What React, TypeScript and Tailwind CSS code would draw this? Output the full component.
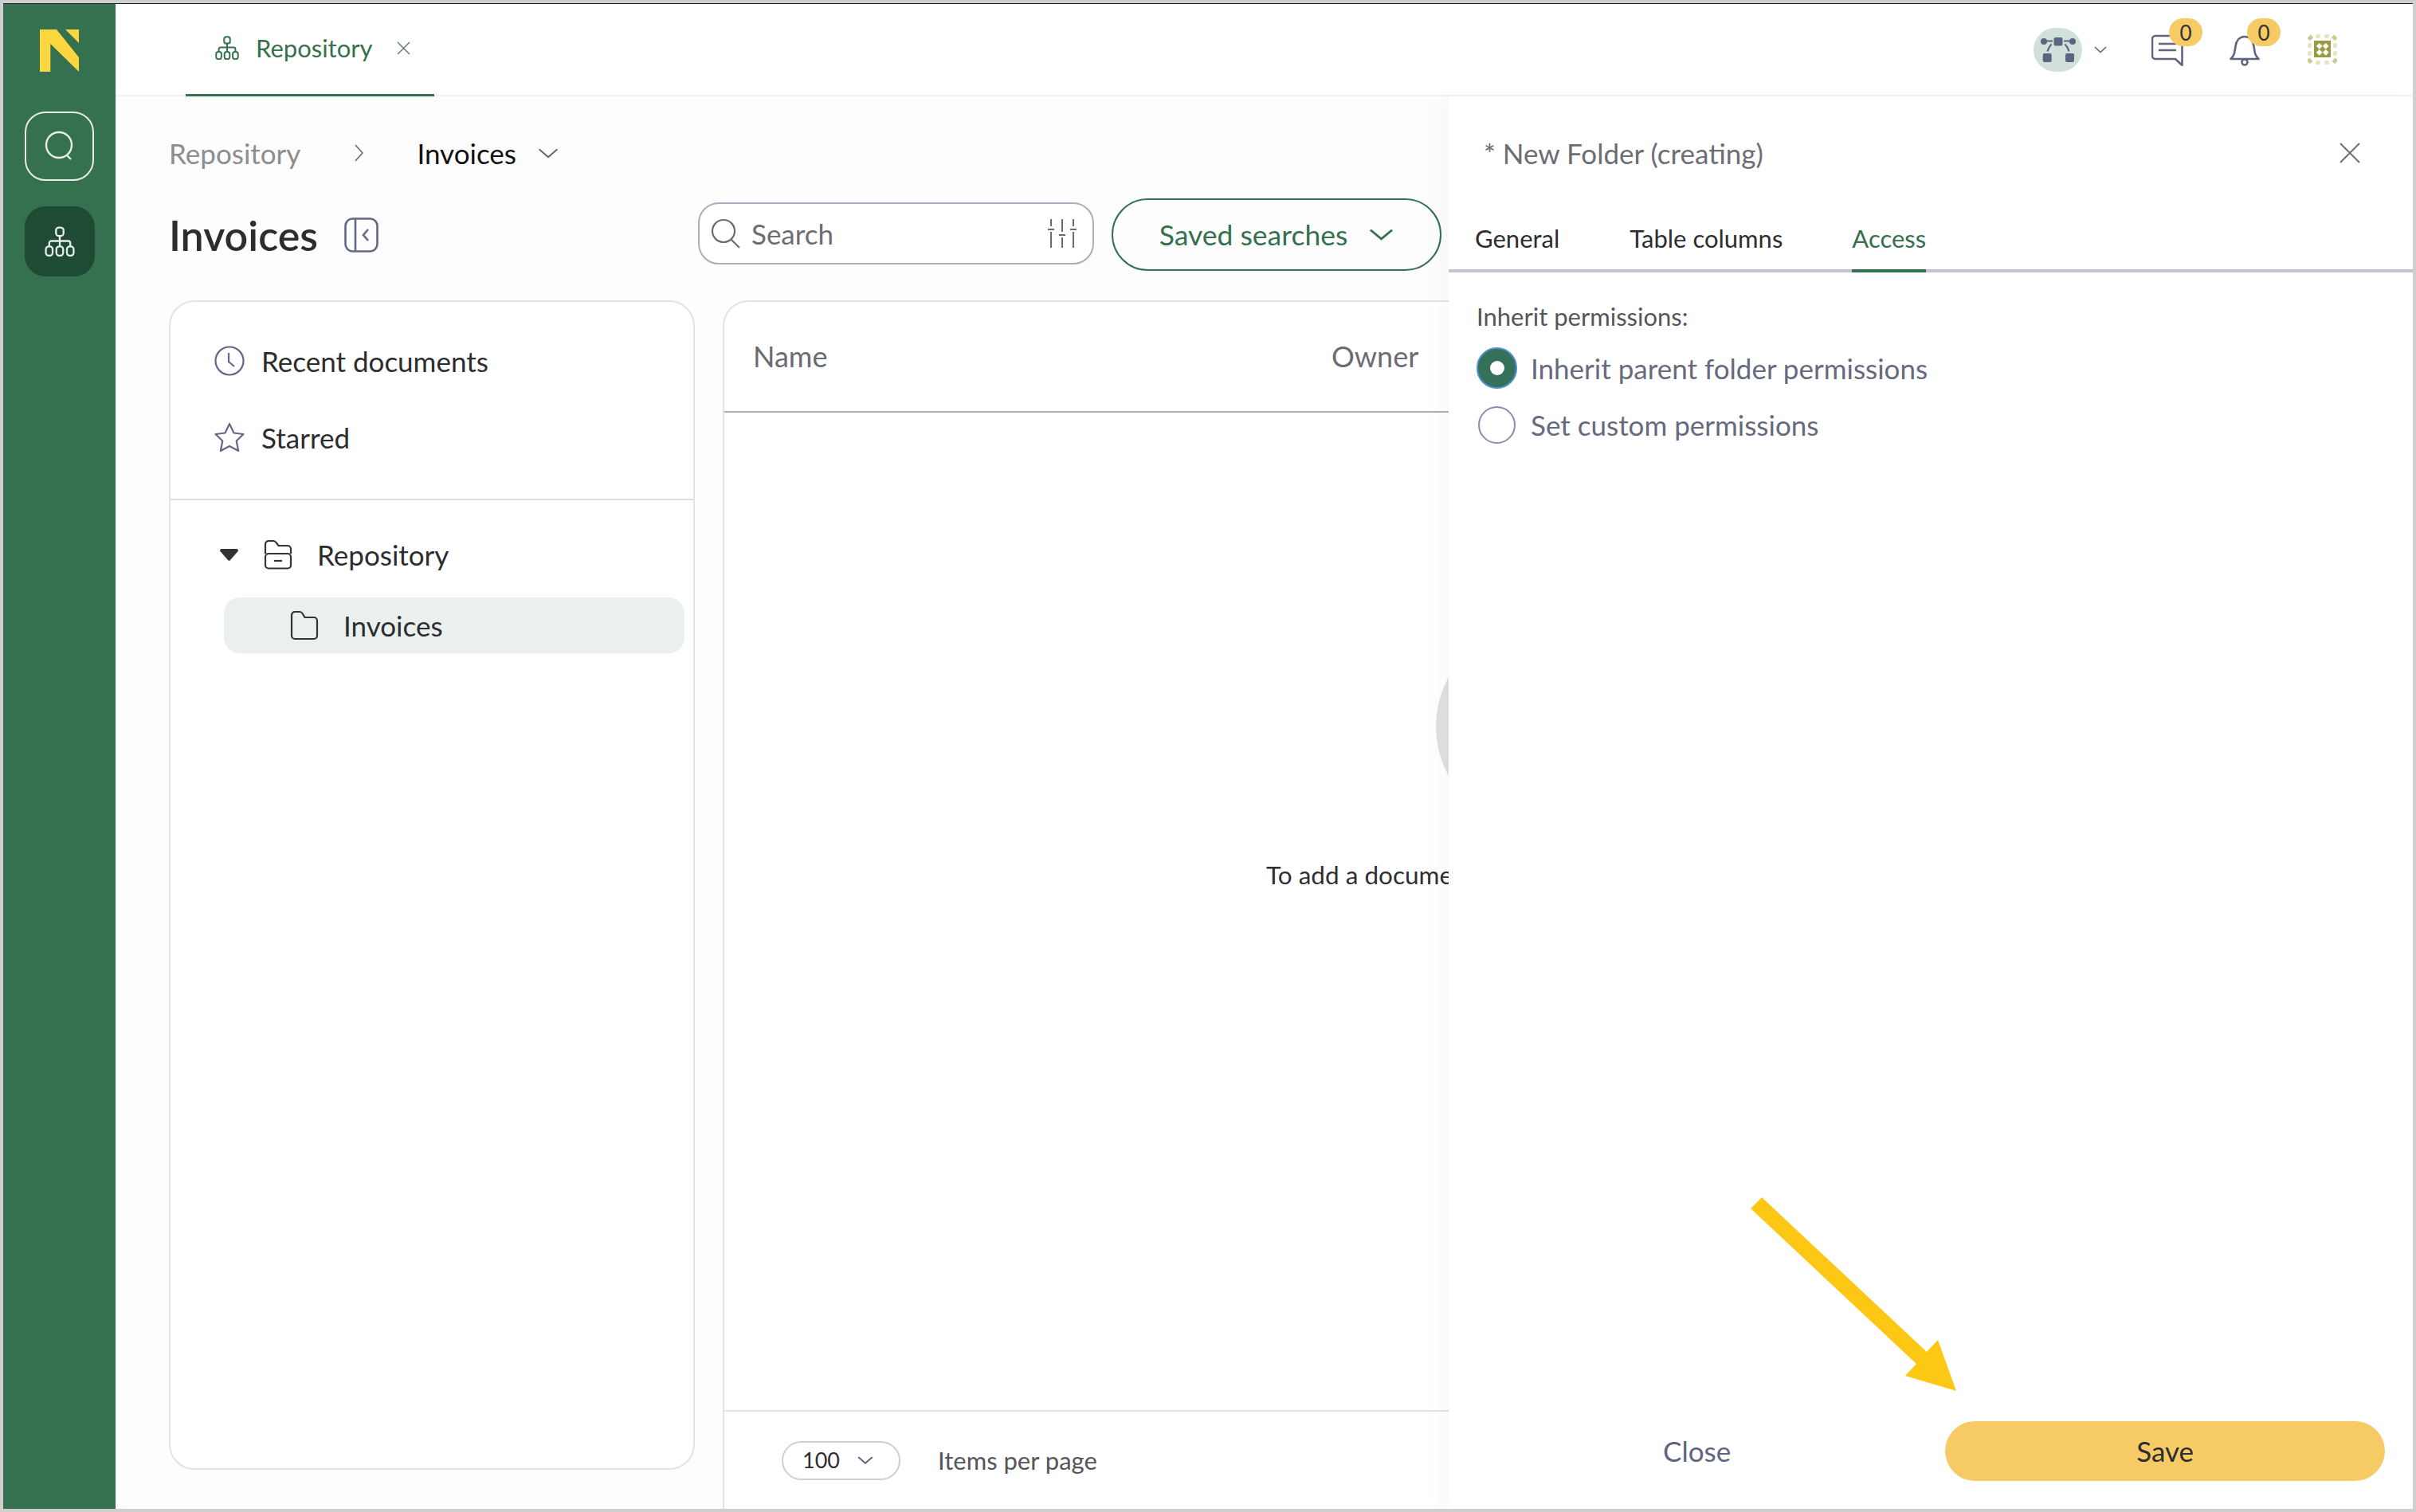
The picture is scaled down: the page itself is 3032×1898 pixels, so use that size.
function Tree({ c = "currentColor", w = 2.2, className = "" }: { c?: string; w?: number; className?: string }) {
  return (
    <svg viewBox="0 0 36 36" fill="none" stroke={c} strokeWidth={w} className={className}>
      <rect x="13.5" y="1.5" width="9" height="10" rx="3.5" />
      <path d="M18 11.5V17M5.5 24v-4a2.5 2.5 0 0 1 2.5-2.5h20a2.5 2.5 0 0 1 2.5 2.5v4M18 17v7" />
      <rect x="1.5" y="24" width="8" height="11" rx="3.5" />
      <rect x="14" y="24" width="8" height="11" rx="3.5" />
      <rect x="26.5" y="24" width="8" height="11" rx="3.5" />
    </svg>
  );
}

function Chevron({ className = "", c = "#5f6580", w = 2 }: { className?: string; c?: string; w?: number }) {
  return (
    <svg viewBox="0 0 24 14" preserveAspectRatio="none" fill="none" stroke={c} strokeWidth={w} className={className}>
      <path d="M1.5 1.5 12 12 22.5 1.5" />
    </svg>
  );
}

function Badge() {
  return (
    <span className="absolute left-[22px] top-[-20px] flex h-[35px] w-[42px] items-center justify-center rounded-full bg-[#f6ca64] pt-[2px] text-[26px] leading-none text-[#333]">
      0
    </span>
  );
}

export default function App() {
  return (
    <div className="relative h-[1898px] w-[3032px] overflow-hidden bg-[#cfcfcf] pb-[4px] pl-[4px] pr-[4px] pt-[4px] font-[Lato,sans-serif]">
      <div className="flex h-[1890px] w-[3024px] border-t border-[#222] bg-white">
        {/* rail */}
        <aside className="flex w-[141px] flex-none flex-col items-center bg-[#35704f] pt-[32px]">
          <svg viewBox="0 0 49 53" className="h-[53px] w-[49px]">
            <path d="M0 0h21l28 35v18L13.300 18v35H0z" fill="#fbd63e" />
            <path d="M32 0h17v17z" fill="#fbd63e" />
          </svg>
          <button className="mt-[50px] flex h-[87px] w-[87px] items-center justify-center rounded-[26px] border-2 border-[#e4ede7]">
            <svg viewBox="0 0 40 40" fill="none" stroke="#e4ede7" strokeWidth="2.4" className="h-[40px] w-[40px]">
              <circle cx="19" cy="18" r="16" />
              <path d="M29 31l5 5" />
            </svg>
          </button>
          <button className="mt-[32px] flex h-[88px] w-[88px] items-center justify-center rounded-[26px] bg-[#1f4a33]">
            <Tree c="#e4ede7" className="h-[38px] w-[38px]" />
          </button>
        </aside>

        <div className="flex min-w-0 flex-1 flex-col">
          {/* top bar */}
          <header className="flex h-[116px] flex-none items-stretch border-b-2 border-[#f2f2f2] bg-white">
            <div className="-mb-[2px] ml-[88px] flex w-[312px] items-center border-b-[3px] border-[#35704f] pb-[3px] pl-[37px] text-[#35704f]">
              <Tree className="h-[30px] w-[30px]" w={2.4} />
              <span className="ml-[21px] text-[31px]">Repository</span>
              <svg viewBox="0 0 17 17" fill="none" stroke="#5a7a68" strokeWidth="1.4" className="ml-[31px] h-[17px] w-[17px]">
                <path d="M1 1l15 15M16 1 1 16" />
              </svg>
            </div>
            <div className="ml-auto flex items-center pr-[95px]">
              <div className="flex h-[55px] w-[61px] items-center justify-center rounded-full bg-[#d2e0da]">
                <svg viewBox="0 0 44 31" fill="#5c6484" className="h-[31px] w-[44px]">
                  <rect x="16.500" y="0" width="11" height="10.500" rx="2" />
                  <rect x="2.700" y="20" width="11" height="11" rx="2" />
                  <rect x="31" y="20" width="11" height="11" rx="2" />
                  <circle cx="4" cy="5" r="4" />
                  <circle cx="40" cy="5" r="4" />
                  <path d="M7 4.500h8M29 4.500h8M13.500 8.500C11 11 9.500 14 8.500 17.500M30.500 8.500C33 11 34.500 14 35.500 17.500" fill="none" stroke="#5c6484" strokeWidth="2.200" />
                </svg>
              </div>
              <Chevron className="ml-[15px] h-[9px] w-[16px]" c="#5f6580" w={2.4} />
              <div className="relative ml-[56px] h-[39px] w-[40px]">
                <svg viewBox="0 0 40 40" fill="none" stroke="#5f6580" strokeWidth="2.6" className="h-[40px] w-[40px]">
                  <path d="M38.5 39 30 31H5a4 4 0 0 1-4-4V6a4 4 0 0 1 4-4h33.500z" strokeLinejoin="round" />
                  <path d="M9 12h22M9 20h22" />
                </svg>
                <Badge />
              </div>
              <div className="relative ml-[58px] h-[39px] w-[38px]">
                <svg viewBox="0 0 38 40" fill="none" stroke="#5f6580" strokeWidth="2.6" className="h-[40px] w-[38px]">
                  <path d="M1.500 31c5-5 5-9 6-16 1-7 5-12 11.500-12s10.500 5 11.500 12c1 7 1 11 6 16z" strokeLinejoin="round" />
                  <circle cx="19" cy="35" r="3.500" />
                </svg>
                <Badge />
              </div>
              <svg viewBox="0 0 37 38" className="ml-[60px] h-[38px] w-[37px]">
                <g fill="#c8cd8c">
                  <rect x="0" y="2" width="6" height="5" transform="rotate(-45 3 4)" />
                  <rect x="31" y="2" width="6" height="5" transform="rotate(45 34 4)" />
                  <rect x="0" y="31" width="6" height="5" transform="rotate(45 3 33)" />
                  <rect x="31" y="31" width="6" height="5" transform="rotate(-45 34 33)" />
                </g>
                <g fill="#e3e6bf">
                  <rect x="10" y="0" width="6" height="5" rx="2" />
                  <rect x="21" y="0" width="6" height="5" rx="2" />
                  <rect x="10" y="33" width="6" height="5" rx="2" />
                  <rect x="21" y="33" width="6" height="5" rx="2" />
                  <rect x="0" y="11" width="5" height="6" rx="2" />
                  <rect x="0" y="21" width="5" height="6" rx="2" />
                  <rect x="32" y="11" width="5" height="6" rx="2" />
                  <rect x="32" y="21" width="5" height="6" rx="2" />
                </g>
                <rect x="8" y="8" width="21" height="21" fill="#9a9a44" />
                <g fill="#fff">
                  <rect x="12" y="12" width="5.500" height="5.500" transform="rotate(45 14.700 14.700)" />
                  <rect x="20" y="12" width="5.500" height="5.500" transform="rotate(45 22.700 14.700)" />
                  <rect x="12" y="20" width="5.500" height="5.500" transform="rotate(45 14.700 22.700)" />
                  <rect x="20" y="20" width="5.500" height="5.500" transform="rotate(45 22.700 22.700)" />
                </g>
              </svg>
            </div>
          </header>

          <div className="flex min-h-0 flex-1">
            {/* page */}
            <main className="flex w-[1673px] flex-none flex-col overflow-hidden bg-[#fdfdfd] pl-[67px] pr-[9px]">
              <div className="mt-[41px] flex h-[60px] flex-none items-center text-[35px]">
                <span className="text-[#8d8d8d]">Repository</span>
                <svg viewBox="0 0 11 22" fill="none" stroke="#5f6580" strokeWidth="1.6" className="ml-[68px] h-[22px] w-[11px]">
                  <path d="M1 1l9 10-9 10" />
                </svg>
                <span className="ml-[67px] text-[#111]">Invoices</span>
                <Chevron className="ml-[27px] h-[13px] w-[26px]" />
              </div>
              <div className="mt-[27px] flex h-[91px] flex-none items-center">
                <h1 className="text-[52px] font-semibold leading-none text-[#2d2d2f]">Invoices</h1>
                <svg viewBox="0 0 43 44" fill="none" stroke="#636985" strokeWidth="2.6" className="ml-[33px] h-[44px] w-[43px]">
                  <rect x="1.500" y="1.500" width="40" height="41" rx="9" />
                  <path d="M14 1.500v41M30 15l-6 7 6 7" />
                </svg>
                <div className="mb-[3px] ml-auto flex h-[78px] w-[497px] items-center rounded-[26px] border-2 border-[#adadc0] bg-white pl-[14px] pr-[20px]">
                  <svg viewBox="0 0 38 38" fill="none" stroke="#6b6b73" strokeWidth="2.2" className="h-[38px] w-[38px]">
                    <circle cx="16" cy="16" r="14" />
                    <path d="M26 27l10 10" />
                  </svg>
                  <span className="ml-[13px] text-[35px] text-[#6d6d74]">Search</span>
                  <svg viewBox="0 0 36 36" fill="none" stroke="#6b6b73" strokeWidth="2" className="ml-auto h-[36px] w-[36px]">
                    <path d="M4 0v9M4 16v20M18 0v16M18 23v13M32 0v9M32 16v20M0 13h8M14 20h8M28 13h8" />
                  </svg>
                </div>
                <button className="ml-[22px] flex h-[91px] w-[414px] items-center justify-center rounded-full border-2 border-[#35704f] text-[35.500px] text-[#35704f]">
                  Saved searches
                  <Chevron className="ml-[27px] h-[15px] w-[31px]" c="#35704f" w={2.4} />
                </button>
              </div>
              <div className="mt-[37px] flex min-h-0 flex-1 items-start">
                <nav className="h-[1468px] w-[660px] flex-none rounded-[32px] border-2 border-[#e3e3e3] bg-white">
                  <div className="h-[249px] border-b-2 border-[#dedee2] pt-[26px]">
                    <div className="flex h-[96px] items-center pl-[55px] text-[35px] text-[#2d2d2f]">
                      <svg viewBox="0 0 38 38" fill="none" stroke="#636985" strokeWidth="2.2" className="h-[38px] w-[38px]">
                        <circle cx="19" cy="19" r="17.500" />
                        <path d="M18 9v11l7 6" />
                      </svg>
                      <span className="ml-[21px]">Recent documents</span>
                    </div>
                    <div className="flex h-[96px] items-center pl-[55px] text-[35px] text-[#2d2d2f]">
                      <svg viewBox="0 0 38 38" fill="none" stroke="#636985" strokeWidth="2.2" strokeLinejoin="round" className="h-[38px] w-[38px]">
                        <path d="M19 2l5.500 11.500 12 1.500-8.800 8.500 2.500 12.500L19 30l-11.200 6 2.500-12.500L1.500 15l12-1.500z" />
                      </svg>
                      <span className="ml-[21px]">Starred</span>
                    </div>
                  </div>
                  <div className="mt-[38px] flex h-[60px] items-center pl-[62px] text-[35px] text-[#2d2d2f]">
                    <svg viewBox="0 0 23 15" className="h-[15px] w-[23px]">
                      <path d="M2 0h19a2 2 0 0 1 1.600 3L13 14a2 2 0 0 1-3 0L.4 3A2 2 0 0 1 2 0z" fill="#333" />
                    </svg>
                    <svg viewBox="0 0 36 38" fill="none" stroke="#333" strokeWidth="2.2" className="ml-[32px] h-[38px] w-[36px]">
                      <path d="M2 18V6a4 4 0 0 1 4-4h6a4 4 0 0 1 3.500 2l3 4H30a4 4 0 0 1 4 4v6" />
                      <rect x="2" y="18" width="32" height="18.500" rx="4" />
                      <path d="M13 27h10" />
                    </svg>
                    <span className="ml-[31px]">Repository</span>
                  </div>
                  <div className="ml-[67px] mt-[24px] flex h-[70px] w-[578px] items-center rounded-[20px] bg-[#e9f0ee] pl-[83px] text-[35px] text-[#2d2d2f]">
                    <svg viewBox="0 0 36 38" fill="none" stroke="#333" strokeWidth="2.2" className="h-[38px] w-[36px]">
                      <path d="M2 32V6a4 4 0 0 1 4-4h6a4 4 0 0 1 3.500 2l3 5H30a4 4 0 0 1 4 4v19a4 4 0 0 1-4 4H6a4 4 0 0 1-4-4z" />
                    </svg>
                    <span className="ml-[31px]">Invoices</span>
                  </div>
                </nav>
                <section className="ml-[35px] flex h-full w-[1200px] flex-none flex-col rounded-tl-[32px] border-l-2 border-t-2 border-[#e3e3e3] bg-white">
                  <div className="flex h-[139px] flex-none items-center border-b-2 border-[#aeaec0] pb-[2px] pl-[36px] text-[36px] text-[#6b6b73]">
                    <span className="w-[726px]">Name</span>
                    <span>Owner</span>
                  </div>
                  <div className="flex-1 pt-[266px]">
                    <div className="ml-[893px] h-[256px] w-[256px] rounded-full bg-[#e0e0e0]" />
                    <p className="ml-[680px] mt-[38px] h-[40px] whitespace-nowrap text-[31.500px] leading-[40px] text-[#2f2f31]">
                      To add a document
                    </p>
                  </div>
                  <div className="flex h-[124px] flex-none items-center border-t-2 border-[#e3e3e3] pl-[72px]">
                    <div className="flex h-[49px] w-[149px] items-center rounded-full border-2 border-[#cfcfcf] pl-[24px] text-[27px] text-[#2d2d2f]">
                      100
                      <Chevron className="ml-[22px] h-[10px] w-[20px]" w={2.6} />
                    </div>
                    <span className="ml-[47px] text-[31px] text-[#55555a]">Items per page</span>
                  </div>
                </section>
              </div>
            </main>

            {/* side panel */}
            <aside className="relative z-10 flex w-[1210px] flex-none flex-col bg-white shadow-[-14px_0_20px_rgba(0,0,0,0.02)]">
              <div className="flex h-[144px] flex-none items-center justify-between pb-[2px] pl-[44px] pr-[66px]">
                <span className="text-[35px] text-[#6d6d74]">* New Folder (creating)</span>
                <svg viewBox="0 0 26 26" fill="none" stroke="#707070" strokeWidth="2" className="h-[26px] w-[26px]">
                  <path d="M1 1l24 24M25 1 1 25" />
                </svg>
              </div>
              <div className="flex h-[77px] flex-none items-stretch border-b-[4px] border-[#c3c3d3] pl-[33px] text-[31px]">
                <span className="pb-[8px] pt-[11px] text-[#2d2d2f]">General</span>
                <span className="ml-[88px] pb-[8px] pt-[11px] text-[#2d2d2f]">Table columns</span>
                <span className="-mb-[4px] ml-[87px] border-b-[4px] border-[#35704f] pb-[8px] pt-[11px] text-[#35704f]">Access</span>
              </div>
              <div className="flex-1 pl-[35px]">
                <p className="mt-[35px] h-[40px] text-[31px] leading-[40px] text-[#55555a]">Inherit permissions:</p>
                <div className="mt-[19px] flex h-[52px] items-center text-[35px] text-[#666a7e]">
                  <span className="flex h-[52px] w-[51px] items-center justify-center rounded-full border-2 border-[#4f8fd0] bg-[#35705a]">
                    <span className="h-[18px] w-[18px] rounded-full bg-white" />
                  </span>
                  <span className="ml-[17px]">Inherit parent folder permissions</span>
                </div>
                <div className="mt-[19px] flex h-[52px] items-center text-[35px] text-[#666a7e]">
                  <span className="ml-[2px] h-[47px] w-[47px] rounded-full border-2 border-[#8c8ca8] bg-white" />
                  <span className="ml-[19px]">Set custom permissions</span>
                </div>
              </div>
              <div className="flex h-[110px] flex-none items-start">
                <span className="ml-[269px] mt-[12px] text-[35px] leading-[50px] text-[#60657f]">Close</span>
                <button className="ml-[269px] h-[75px] w-[552px] rounded-full bg-[#f6ca64] text-[35px] text-[#2d2d2f]">Save</button>
              </div>
            </aside>
          </div>
        </div>
      </div>

      {/* annotation arrow */}
      <svg viewBox="0 0 3032 1898" className="pointer-events-none absolute left-0 top-0 z-20 h-[1898px] w-[3032px]">
        <path d="M2211 1503 2197 1517 2405 1712 2391 1727 2455 1746 2432 1682 2418 1697z" fill="#fdc813" />
      </svg>
    </div>
  );
}
